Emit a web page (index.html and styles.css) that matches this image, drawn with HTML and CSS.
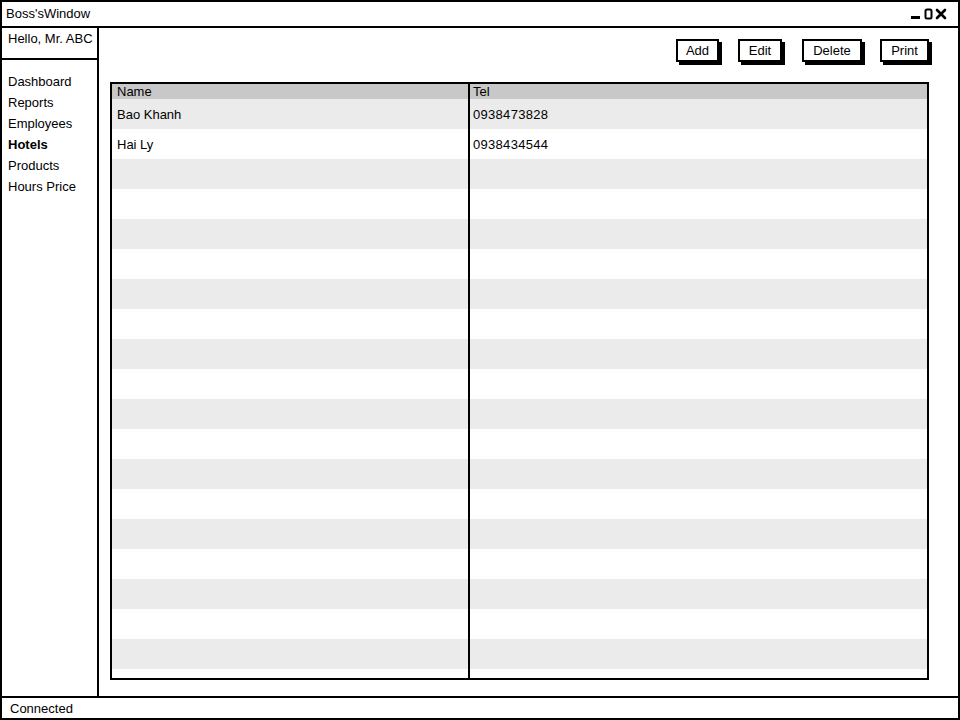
FILE: index.html
```html
<!DOCTYPE html>
<html>
<head>
<meta charset="utf-8">
<link rel="stylesheet" href="styles.css">
</head>
<body>
<div class="window">
  <div class="titlebar">
    <span class="title">Boss'sWindow</span>
    <svg class="winctl" width="42" height="12" viewBox="0 0 42 12">
      <rect x="1" y="8" width="9" height="3" fill="#000"/>
      <rect x="15.5" y="1.5" width="6" height="9" rx="1.5" fill="none" stroke="#000" stroke-width="2"/>
      <path d="M27 2 L35 10 M35 2 L27 10" stroke="#000" stroke-width="2.6" stroke-linecap="round"/>
    </svg>
  </div>
  <div class="body">
    <div class="sidebar">
      <div class="greeting">Hello, Mr. ABC</div>
      <ul class="menu">
        <li>Dashboard</li>
        <li>Reports</li>
        <li>Employees</li>
        <li class="active">Hotels</li>
        <li>Products</li>
        <li>Hours Price</li>
      </ul>
    </div>
    <div class="main">
      <div class="toolbar">
        <button class="btn btn-add">Add</button>
        <button class="btn btn-edit">Edit</button>
        <button class="btn btn-delete">Delete</button>
        <button class="btn btn-print">Print</button>
      </div>
      <div class="table">
        <div class="col col-name">
          <div class="cell head">Name</div>
          <div class="cell">Bao Khanh</div>
          <div class="cell">Hai Ly</div>
          <div class="cell"></div><div class="cell"></div><div class="cell"></div><div class="cell"></div>
          <div class="cell"></div><div class="cell"></div><div class="cell"></div><div class="cell"></div>
          <div class="cell"></div><div class="cell"></div><div class="cell"></div><div class="cell"></div>
          <div class="cell"></div><div class="cell"></div><div class="cell"></div><div class="cell"></div>
          <div class="cell"></div>
          <div class="filler"></div>
        </div>
        <div class="col col-tel">
          <div class="cell head">Tel</div>
          <div class="cell num">0938473828</div>
          <div class="cell num">0938434544</div>
          <div class="cell"></div><div class="cell"></div><div class="cell"></div><div class="cell"></div>
          <div class="cell"></div><div class="cell"></div><div class="cell"></div><div class="cell"></div>
          <div class="cell"></div><div class="cell"></div><div class="cell"></div><div class="cell"></div>
          <div class="cell"></div><div class="cell"></div><div class="cell"></div><div class="cell"></div>
          <div class="cell"></div>
          <div class="filler"></div>
        </div>
      </div>
    </div>
  </div>
  <div class="statusbar">Connected</div>
</div>
</body>
</html>
```

FILE: styles.css
```css
* { box-sizing: border-box; }
html, body { margin: 0; padding: 0; background: #fff; }
body {
  font-family: "Liberation Sans", Arial, sans-serif;
  font-size: 13px;
  color: #000;
}
.window {
  width: 960px;
  height: 720px;
  border: 2px solid #000;
  display: flex;
  flex-direction: column;
  overflow: hidden;
}
.titlebar {
  height: 26px;
  border-bottom: 2px solid #000;
  display: flex;
  align-items: center;
  justify-content: space-between;
  padding: 0 6px 1px 4px;
  flex: none;
}
.title { line-height: 16px; }
.winctl { margin-top: 1px; }
.body {
  flex: 1;
  display: flex;
  min-height: 0;
}
.sidebar {
  width: 97px;
  border-right: 2px solid #000;
  display: flex;
  flex-direction: column;
  flex: none;
}
.greeting {
  height: 32px;
  border-bottom: 2px solid #000;
  padding: 3px 0 0 6px;
  line-height: 16px;
}
.menu {
  list-style: none;
  margin: 0;
  padding: 13px 0 0 6px;
}
.menu li {
  height: 21px;
  line-height: 17px;
}
.menu li.active { font-weight: bold; }
.main {
  flex: 1;
  display: flex;
  flex-direction: column;
  padding: 11px 29px 16px 11px;
  min-width: 0;
}
.toolbar {
  display: flex;
  justify-content: flex-end;
  height: 43px;
  flex: none;
}
.btn {
  font-family: inherit;
  font-size: 13px;
  height: 23px;
  padding: 0;
  background: #fff;
  border: 2px solid #000;
  box-shadow: 3px 3px 0 #000;
  border-radius: 0;
  color: #000;
  line-height: 18px;
}
.btn-add { width: 43px; }
.btn-edit { width: 44px; margin-left: 19px; }
.btn-delete { width: 60px; margin-left: 20px; }
.btn-print { width: 49px; margin-left: 18px; }
.table {
  flex: 1;
  border: 2px solid #000;
  display: flex;
  min-height: 0;
  overflow: hidden;
}
.col {
  display: flex;
  flex-direction: column;
}
.col-name {
  width: 358px;
  border-right: 2px solid #000;
  flex: none;
}
.col-tel { flex: 1; }
.cell {
  height: 30px;
  line-height: 28px;
  padding: 2px 0 0 5px;
  background: #fff;
  flex: none;
  white-space: nowrap;
}
.cell:nth-child(even) { background: #ebebeb; }
.cell.head {
  height: 15px;
  line-height: 15px;
  padding-top: 0;
  background: #c8c8c8;
}
.col-tel .cell { padding-left: 3px; }
.num { letter-spacing: 0.3px; }
.filler { flex: 1; background: #fff; }
.statusbar {
  height: 22px;
  border-top: 2px solid #000;
  padding: 3px 0 0 8px;
  line-height: 16px;
  flex: none;
}
```
